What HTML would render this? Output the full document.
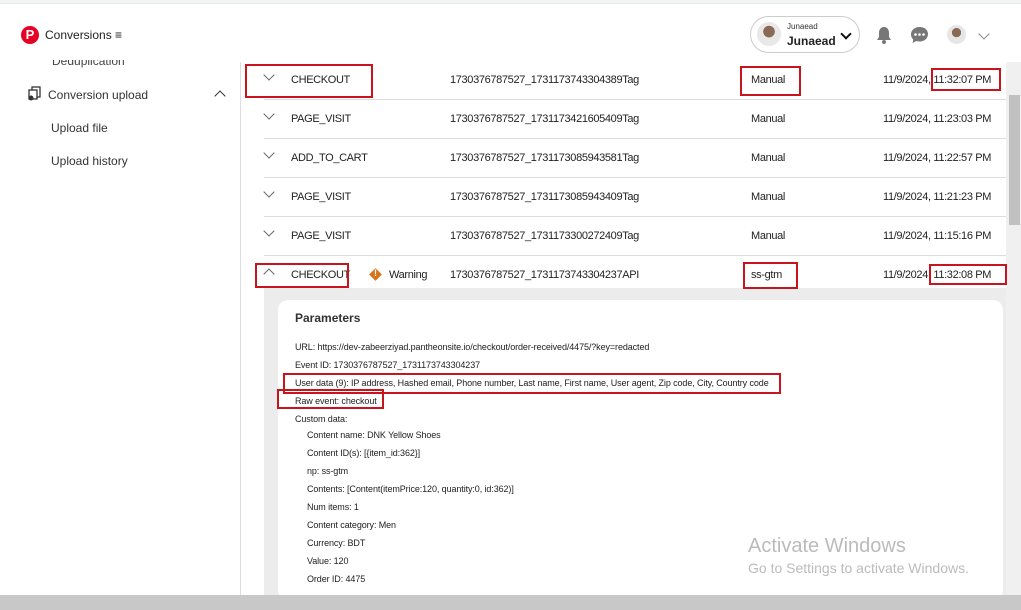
<!DOCTYPE html>
<html><head><meta charset="utf-8"><style>
*{margin:0;padding:0;box-sizing:border-box}
body{width:1021px;height:610px;overflow:hidden;background:#fff;font-family:"Liberation Sans",sans-serif;color:#222;position:relative}
.a{position:absolute;white-space:nowrap}
.r{font-size:11px;color:#222;letter-spacing:-0.35px}
.line{position:absolute;left:264px;width:742px;height:1px;background:#ddd}
.box{position:absolute;border:2px solid #c8141c}
.chev{position:absolute;width:8px;height:8px;border-right:1.6px solid #666;border-bottom:1.6px solid #666;transform:rotate(45deg)}
.p{position:absolute;font-size:9px;color:#222;white-space:nowrap;letter-spacing:-0.1px}
</style></head><body>
<div class="a" style="left:0;top:0;width:1021px;height:4px;background:#f3f5f5;border-bottom:1px solid #e4e8e8"></div>
<div class="a" style="left:21px;top:26px;width:18px;height:18px;border-radius:50%;background:#e60023;color:#fff;font-weight:bold;font-size:13px;text-align:center;line-height:18px">P</div>
<div class="a" style="left:45px;top:28px;font-size:12px;color:#222">Conversions <span style="font-size:12px">&#8801;</span></div>
<div class="a" style="left:52px;top:60px;font-size:12px;color:#444;height:8px;overflow:hidden;line-height:2px">Deduplication</div>
<svg class="a" style="left:27px;top:86px" width="15" height="15" viewBox="0 0 15 15"><rect x="5" y="1" width="8" height="10" fill="none" stroke="#333" stroke-width="1.3"/><rect x="2" y="4" width="8" height="9" fill="#fff" stroke="#333" stroke-width="1.3"/><circle cx="4" cy="12" r="2.5" fill="#333"/></svg>
<div class="a" style="left:48px;top:88px;font-size:12px;color:#333">Conversion upload</div>
<div class="chev" style="left:216px;top:92px;transform:rotate(225deg);border-color:#333"></div>
<div class="a" style="left:51px;top:121px;font-size:12px;color:#333">Upload file</div>
<div class="a" style="left:51px;top:154px;font-size:12px;color:#333">Upload history</div>
<div class="a" style="left:240px;top:62px;width:1px;height:533px;background:#ddd"></div>
<div class="a" style="left:750px;top:16px;width:110px;height:37px;border:1px solid #ccc;border-radius:19px;background:#fff"></div>
<div class="a" style="left:757px;top:22px;width:24px;height:24px;border-radius:50%;background:radial-gradient(circle at 50% 40%,#8a6a55 0 30%,#e8e8e8 32%)"></div>
<div class="a" style="left:787px;top:22px;font-size:8px;color:#333">Junaead</div>
<div class="a" style="left:787px;top:34px;font-size:12px;font-weight:bold;color:#222">Junaead</div>
<div class="chev" style="left:842px;top:30px;border-color:#111;border-width:2px"></div>
<svg class="a" style="left:876px;top:26px" width="16" height="18" viewBox="0 0 16 18"><path d="M8 1C4.5 1 3 4 3 7v4l-2 3h14l-2-3V7c0-3-1.5-6-5-6z" fill="#777"/><circle cx="8" cy="16" r="2" fill="#777"/></svg>
<svg class="a" style="left:910px;top:26px" width="19" height="18" viewBox="0 0 19 18"><path d="M9.5 1C4.5 1 1 4.3 1 8.5c0 2 .8 3.8 2.3 5.1L2.5 17l4-2c1 .3 2 .5 3 .5 5 0 8.5-3.3 8.5-7.5S14.5 1 9.5 1z" fill="#777"/><circle cx="5.5" cy="8.5" r="1.3" fill="#fff"/><circle cx="9.5" cy="8.5" r="1.3" fill="#fff"/><circle cx="13.5" cy="8.5" r="1.3" fill="#fff"/></svg>
<div class="a" style="left:947px;top:25px;width:19px;height:19px;border-radius:50%;background:radial-gradient(circle at 50% 40%,#8a6a55 0 30%,#e6e6e6 32%)"></div>
<div class="chev" style="left:980px;top:30px;border-color:#888"></div>
<div class="line" style="top:99px"></div><div class="line" style="top:138px"></div><div class="line" style="top:177px"></div><div class="line" style="top:216px"></div><div class="line" style="top:255px"></div>
<div class="chev" style="left:265px;top:71px"></div><div class="a r" style="left:291px;top:74px">CHECKOUT</div><div class="a r" style="left:450px;top:74px">1730376787527_1731173743304389Tag</div><div class="a r" style="left:751px;top:74px">Manual</div><div class="a r" style="left:883px;top:74px">11/9/2024, 11:32:07 PM</div>
<div class="chev" style="left:265px;top:110px"></div><div class="a r" style="left:291px;top:113px">PAGE_VISIT</div><div class="a r" style="left:450px;top:113px">1730376787527_1731173421605409Tag</div><div class="a r" style="left:751px;top:113px">Manual</div><div class="a r" style="left:883px;top:113px">11/9/2024, 11:23:03 PM</div>
<div class="chev" style="left:265px;top:149px"></div><div class="a r" style="left:291px;top:152px">ADD_TO_CART</div><div class="a r" style="left:450px;top:152px">1730376787527_1731173085943581Tag</div><div class="a r" style="left:751px;top:152px">Manual</div><div class="a r" style="left:883px;top:152px">11/9/2024, 11:22:57 PM</div>
<div class="chev" style="left:265px;top:188px"></div><div class="a r" style="left:291px;top:191px">PAGE_VISIT</div><div class="a r" style="left:450px;top:191px">1730376787527_1731173085943409Tag</div><div class="a r" style="left:751px;top:191px">Manual</div><div class="a r" style="left:883px;top:191px">11/9/2024, 11:21:23 PM</div>
<div class="chev" style="left:265px;top:227px"></div><div class="a r" style="left:291px;top:230px">PAGE_VISIT</div><div class="a r" style="left:450px;top:230px">1730376787527_1731173300272409Tag</div><div class="a r" style="left:751px;top:230px">Manual</div><div class="a r" style="left:883px;top:230px">11/9/2024, 11:15:16 PM</div>
<div class="chev" style="left:265px;top:270px;transform:rotate(225deg)"></div><div class="a r" style="left:291px;top:269px">CHECKOUT</div>
<div class="a" style="left:371px;top:270px;width:9px;height:9px;background:#d9731a;transform:rotate(45deg)"></div><div class="a" style="left:374px;top:268px;font-size:9px;color:#fff;font-weight:bold">!</div>
<div class="a r" style="left:389px;top:269px">Warning</div><div class="a r" style="left:450px;top:269px">1730376787527_1731173743304237API</div><div class="a r" style="left:751px;top:269px">ss-gtm</div><div class="a r" style="left:883px;top:269px">11/9/2024, 11:32:08 PM</div>
<div class="a" style="left:264px;top:288px;width:742px;height:307px;background:#ececec"></div>
<div class="a" style="left:278px;top:300px;width:725px;height:300px;background:#fff;border-radius:10px"></div>
<div class="a" style="left:295px;top:311px;font-size:12px;font-weight:bold;color:#333">Parameters</div>
<div class="p" style="left:295px;top:342px">URL: https://dev-zabeerziyad.pantheonsite.io/checkout/order-received/4475/?key=redacted</div>
<div class="p" style="left:295px;top:360px">Event ID: 1730376787527_1731173743304237</div>
<div class="p" style="left:295px;top:378px">User data (9): IP address, Hashed email, Phone number, Last name, First name, User agent, Zip code, City, Country code</div>
<div class="p" style="left:295px;top:396px">Raw event: checkout</div>
<div class="p" style="left:295px;top:414px">Custom data:</div>
<div class="p" style="left:307px;top:430px">Content name: DNK Yellow Shoes</div>
<div class="p" style="left:307px;top:448px">Content ID(s): [{item_id:362}]</div>
<div class="p" style="left:307px;top:466px">np: ss-gtm</div>
<div class="p" style="left:307px;top:484px">Contents: [Content(itemPrice:120, quantity:0, id:362)]</div>
<div class="p" style="left:307px;top:502px">Num items: 1</div>
<div class="p" style="left:307px;top:520px">Content category: Men</div>
<div class="p" style="left:307px;top:538px">Currency: BDT</div>
<div class="p" style="left:307px;top:556px">Value: 120</div>
<div class="p" style="left:307px;top:574px">Order ID: 4475</div>
<div class="a" style="left:748px;top:535px;font-size:20px;color:#bbb">Activate Windows</div>
<div class="a" style="left:748px;top:560px;font-size:14px;color:#bbb">Go to Settings to activate Windows.</div>
<div class="a" style="left:1006px;top:62px;width:15px;height:533px;background:#f0f0f0"></div>
<div class="a" style="left:1009px;top:95px;width:11px;height:130px;background:#c1c1c1"></div>
<div class="a" style="left:0;top:595px;width:1021px;height:15px;background:#c8c8c8"></div>
<div class="box" style="left:245px;top:64px;width:128px;height:34px"></div>
<div class="box" style="left:740px;top:66px;width:61px;height:30px"></div>
<div class="box" style="left:931px;top:68px;width:70px;height:23px"></div>
<div class="box" style="left:255px;top:263px;width:94px;height:25px"></div>
<div class="box" style="left:743px;top:262px;width:55px;height:27px"></div>
<div class="box" style="left:929px;top:264px;width:78px;height:21px"></div>
<div class="box" style="left:283px;top:373px;width:498px;height:21px"></div>
<div class="box" style="left:277px;top:389px;width:107px;height:20px"></div>
</body></html>
